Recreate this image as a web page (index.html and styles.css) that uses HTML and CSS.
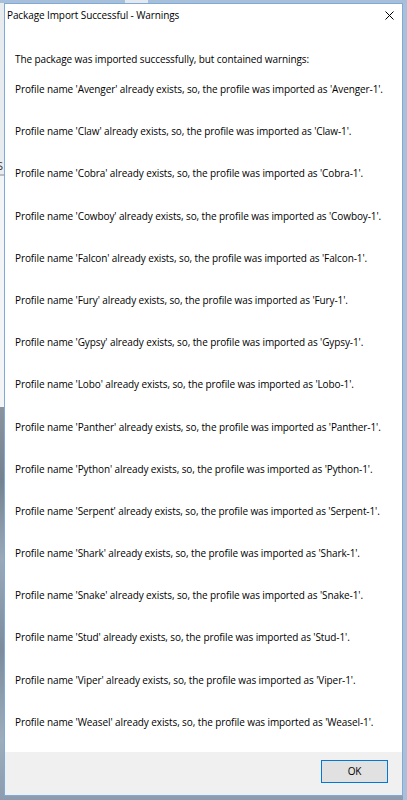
FILE: index.html
```html
<!DOCTYPE html>
<html lang="en">
<head>
    <meta charset="UTF-8">
    <title>Package Import Successful - Warnings</title>
    <link rel="stylesheet" href="styles.css">
</head>
<body>

<!--桌面背景-->
<div class="desktop">
    <span class="behind">S</span>

    <!--对话框-->
    <div class="dialog">
        <div class="titlebar">
            <span class="title">Package Import Successful - Warnings</span>
            <span class="close">
                <svg width="9" height="9" viewBox="0 0 9 9">
                    <path d="M0.5 0.5 L8.5 8.5 M8.5 0.5 L0.5 8.5" stroke="#000" stroke-width="1" fill="none"/>
                </svg>
            </span>
        </div>

        <div class="content">
            <p class="intro">The package was imported successfully, but contained warnings:</p>
            <p class="warn">Profile name 'Avenger' already exists, so, the profile was imported as 'Avenger-1'.</p>
            <p class="warn">Profile name 'Claw' already exists, so, the profile was imported as 'Claw-1'.</p>
            <p class="warn">Profile name 'Cobra' already exists, so, the profile was imported as 'Cobra-1'.</p>
            <p class="warn">Profile name 'Cowboy' already exists, so, the profile was imported as 'Cowboy-1'.</p>
            <p class="warn">Profile name 'Falcon' already exists, so, the profile was imported as 'Falcon-1'.</p>
            <p class="warn">Profile name 'Fury' already exists, so, the profile was imported as 'Fury-1'.</p>
            <p class="warn">Profile name 'Gypsy' already exists, so, the profile was imported as 'Gypsy-1'.</p>
            <p class="warn">Profile name 'Lobo' already exists, so, the profile was imported as 'Lobo-1'.</p>
            <p class="warn">Profile name 'Panther' already exists, so, the profile was imported as 'Panther-1'.</p>
            <p class="warn">Profile name 'Python' already exists, so, the profile was imported as 'Python-1'.</p>
            <p class="warn">Profile name 'Serpent' already exists, so, the profile was imported as 'Serpent-1'.</p>
            <p class="warn">Profile name 'Shark' already exists, so, the profile was imported as 'Shark-1'.</p>
            <p class="warn">Profile name 'Snake' already exists, so, the profile was imported as 'Snake-1'.</p>
            <p class="warn">Profile name 'Stud' already exists, so, the profile was imported as 'Stud-1'.</p>
            <p class="warn">Profile name 'Viper' already exists, so, the profile was imported as 'Viper-1'.</p>
            <p class="warn">Profile name 'Weasel' already exists, so, the profile was imported as 'Weasel-1'.</p>
        </div>

        <div class="footer">
            <a href="javascript:;" class="btn">OK</a>
        </div>
    </div>
</div>

</body>
</html>
```

FILE: styles.css
```css
* {
    margin: 0;
    padding: 0;
}

body {
    width: 407px;
    height: 800px;
    overflow: hidden;
    font-family: "Open Sans", "Noto Sans", sans-serif;
    font-size: 10px;
    letter-spacing: -0.1px;
    color: #000;
}

/*桌面背景*/
.desktop {
    position: relative;
    width: 407px;
    height: 800px;
    padding-top: 3px;
    box-sizing: border-box;
    background:
        linear-gradient(to right, transparent 125px, #e4e9ef 125px, #e4e9ef 148px, transparent 148px) top / 100% 3px no-repeat,
        linear-gradient(to bottom, #a7bfd8 0, #a7bfd8 3px, transparent 3px),
        linear-gradient(to right, transparent 403px, #a9c0d8 403px),
        linear-gradient(to bottom, #e9ecef 0, #e9ecef 174px, #b9bcc0 174px, #b9bcc0 176px, #f3f4f5 176px, #f3f4f5 407px, #8a949f 407px, #75828f 480px, #9aa9b9 560px, #7d8c9c 650px, #9eadbc 740px, #8c9cae 800px);
}

/*背后窗口的文字*/
.behind {
    position: absolute;
    left: -3px;
    top: 158px;
    font-size: 11px;
    color: #333;
}

.dialog {
    margin-left: 4px;
    width: 399px;
    height: 793px;
    border: 1px solid #7fa9d8;
    box-sizing: border-box;
    background-color: #fff;
    display: flex;
    flex-direction: column;
}

.titlebar {
    height: 30px;
    display: flex;
    align-items: center;
    justify-content: space-between;
    padding: 0 8px 8px 2px;
    box-sizing: border-box;
    flex-shrink: 0;
}

.close {
    display: flex;
}

.content {
    flex: 1;
    padding: 17px 10px 0;
    line-height: 16px;
}

.warn {
    margin-top: 26.2px;
}

.intro + .warn {
    margin-top: 14px;
}

/*底部按钮区*/
.footer {
    height: 43px;
    flex-shrink: 0;
    background-color: #f0f0f0;
    display: flex;
    justify-content: flex-end;
    align-items: flex-start;
    padding: 8px 14px 0 0;
    box-sizing: border-box;
}

.btn {
    width: 67px;
    height: 23px;
    line-height: 21px;
    box-sizing: border-box;
    border: 1px solid #0078d7;
    background-color: #e1e1e1;
    text-align: center;
    color: #000;
    text-decoration: none;
}
```
